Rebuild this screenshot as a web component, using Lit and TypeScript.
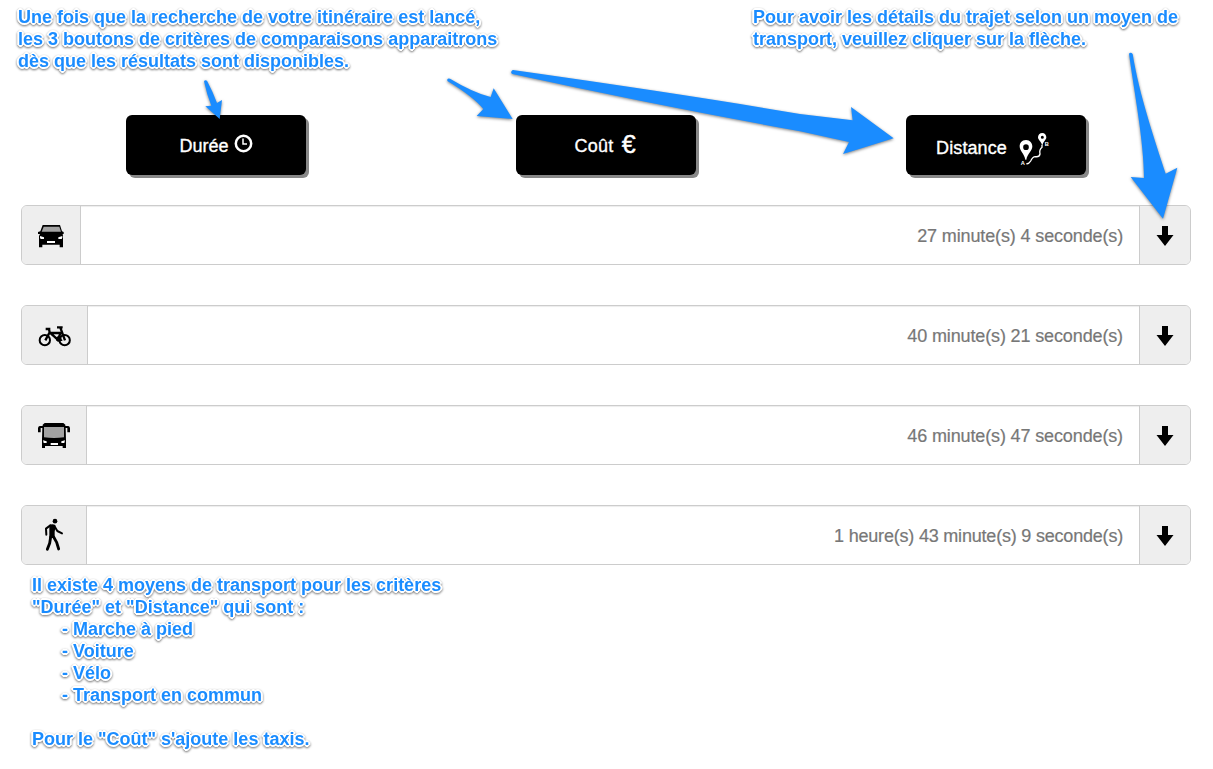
import { LitElement, html, css, svg } from "lit";
import { customElement } from "lit/decorators.js";

const carIcon = svg`
  <path d="M98 90H150L156 109L161 111V117H158L159 123V157H149V149H97V157H87V123L90 117H84V111L91 109Z"/>
  <path fill="#a3a3a3" d="M101 95H148L153 110H95Z"/>
  <path fill="#fff" d="M90 123L102 127V132H92Q89 129 90 123ZM157 123L145 127V132H155Q158 129 157 123ZM111 138H135V144H111Z"/>`;

const bikeIcon = svg`
  <g fill="none" stroke="#000" stroke-width="6">
    <circle cx="104.500" cy="135.500" r="15.500"/><circle cx="164" cy="135.500" r="15.500"/>
    <path stroke-width="7" d="M107 102H121M117 103L119 112L106 136M119 112L143 134L152 114H120M141 97H158M151 98L165 136M144 134L155 134M125 117L143 134"/>
    <path stroke-width="4" d="M141 136H157"/>
  </g>
  <circle cx="146" cy="132" r="8"/>`;

const busIcon = svg`
  <path d="M104 84H160L166 89V93H175Q180 94 180 100V112H172V99H167L168 134V159H158V153H105V159H96V134L97 99H92V112H84V100Q84 94 89 93H98V89Z"/>
  <path fill="#a3a3a3" d="M102 96H162V127Q132 131 102 127Z"/>
  <path fill="#fff" d="M99 136L110 139V144H101ZM165 136L154 139V144H163ZM122 144H144V150H122Z"/>`;

const walkIcon = svg`
  <circle cx="135" cy="78.500" r="7"/>
  <g fill="none" stroke="#000" stroke-linecap="round" stroke-linejoin="round">
    <path stroke-width="6" d="M121 91L108 101L109 119M133 93L142 108L156 115"/>
    <path stroke-width="8.500" d="M122 126L119 145L112 163M131 126L140 142L146 162"/>
  </g>
  <path d="M118 90Q127 85 136 90Q137 99 134 110V129H118V104Z"/>`;

const rows = [
  { icon: carIcon, width: 26, kind: "car", time: "27 minute(s) 4 seconde(s)" },
  { icon: bikeIcon, width: 34, kind: "bike", time: "40 minute(s) 21 seconde(s)" },
  { icon: busIcon, width: 33, kind: "bus", time: "46 minute(s) 47 seconde(s)" },
  { icon: walkIcon, width: 33, kind: "walk", time: "1 heure(s) 43 minute(s) 9 seconde(s)" },
];

@customElement("app-root")
export class AppRoot extends LitElement {
  static styles = css`
    :host {
      display: block;
      position: relative;
      box-sizing: border-box;
      width: 1213px;
      height: 769px;
      overflow: hidden;
      background: #fff;
      font-family: "Liberation Sans", Arial, sans-serif;
      font-size: 18px;
    }
    .notes { display: flex; height: 115px; box-sizing: border-box; padding: 6px 0 0 18px; }
    .note {
      color: #1a8cff;
      font-weight: 700;
      line-height: 22px;
      text-shadow: -2px 0 0 #fff, 2px 0 0 #fff, 0 -2px 0 #fff, 0 2px 0 #fff,
        -1px -1px 0 #fff, 1px -1px 0 #fff, -1px 1px 0 #fff, 1px 1px 0 #fff;
      filter: drop-shadow(0 1.5px 1px rgba(0, 0, 0, 0.55));
    }
    .line { display: block; min-height: 22px; white-space: pre; }
    .launch { width: 735px; }
    .criteria { display: grid; grid-template-columns: repeat(3, 390px); justify-items: center; margin-left: 21px; }
    .button {
      box-sizing: border-box;
      display: flex;
      align-items: center;
      justify-content: center;
      width: 180px;
      height: 60px;
      border-radius: 6px;
      background: #000;
      color: #fff;
      box-shadow: 3px 3px 0 #888;
      -webkit-text-stroke: 0.35px #fff;
    }
    .caption { line-height: 20px; padding-top: 2px; }
    .cost .caption { letter-spacing: 0.3px; }
    .distance .caption { padding-top: 6px; letter-spacing: 0.1px; }
    .button svg { display: block; }
    .clock { margin: 0 0 3px 5px; }
    .euro { font-size: 25px; line-height: 26px; margin: 0 2px 2px 8px; -webkit-text-stroke: 0.4px #fff; }
    .route { margin: 9px 6px 0 12px; }
    .rows { display: flex; flex-direction: column; gap: 40px; margin: 30px 22px 0 21px; }
    .row {
      box-sizing: border-box;
      display: flex;
      height: 60px;
      border: 1px solid #ccc;
      border-radius: 6px;
      overflow: hidden;
      box-shadow: inset 0 1px 1px rgba(0, 0, 0, 0.075);
    }
    .mode { box-sizing: border-box; padding-left: 16px; background: #eee; border-right: 1px solid #ccc; }
    .mode svg { display: block; }
    .car { width: 59px; }
    .bike { width: 66px; }
    .bus, .walk { width: 65px; }
    .time {
      flex: 1;
      padding-right: 16px;
      text-align: right;
      line-height: 60px;
      letter-spacing: -0.13px;
      color: #777;
      -webkit-text-stroke: 0.2px #777;
    }
    .walk + .time { letter-spacing: -0.2px; }
    .expand {
      box-sizing: border-box;
      width: 51px;
      padding-top: 20px;
      padding-left: 16px;
      background: #eee;
      border-left: 1px solid #ccc;
    }
    .expand svg { display: block; }
    .summary { margin: 9px 0 0 32px; }
    .item { padding-left: 30px; }
    .arrows { position: absolute; inset: 0; pointer-events: none; filter: drop-shadow(0 1.5px 1.5px rgba(0, 0, 0, 0.5)); }
  `;

  render() {
    return html`
      <div class="notes">
        <div class="note launch">
          <span class="line">Une fois que la recherche de votre itinéraire est lancé,</span>
          <span class="line">les 3 boutons de critères de comparaisons apparaitrons</span>
          <span class="line">dès que les résultats sont disponibles.</span>
        </div>
        <div class="note">
          <span class="line">Pour avoir les détails du trajet selon un moyen de</span>
          <span class="line">transport, veuillez cliquer sur la flèche.</span>
        </div>
      </div>
      <div class="criteria">
        <div class="button">
          <span class="caption">Durée</span>
          <svg class="clock" width="19" height="19" viewBox="0 0 19 19" fill="none" stroke="#fff">
            <circle cx="9.500" cy="9.500" r="7.700" stroke-width="2.500" />
            <path d="M9 4.500V10H13" stroke-width="1.500" />
          </svg>
        </div>
        <div class="button cost"><span class="caption">Coût</span><span class="euro">€</span></div>
        <div class="button distance">
          <span class="caption">Distance</span>
          <svg class="route" width="31" height="33" viewBox="0 0 93 99">
            <path fill="#fff" fill-rule="evenodd" d="M21 21C8 21 2 31 2 40C2 54 16 63 19 80H22C25 63 40 54 40 40C40 31 33 21 21 21ZM21 34A8.500 8.500 0 1 1 21 51A8.500 8.500 0 1 1 21 34ZM70 0C62 0 57 6 57 13C57 21 66 25 69 35H71C73 25 82 21 82 13C82 6 77 0 70 0ZM70 8A4.500 4.500 0 1 1 70 17A4.500 4.500 0 1 1 70 8Z" />
            <path fill="none" stroke="#fff" stroke-width="4" d="M22 92Q29 94 35 84Q41 71 49 71Q61 73 63 63Q60 50 69 43V35" />
            <text x="5" y="95" font-size="17" font-weight="700" fill="#fff">A</text>
            <text x="77" y="38" font-size="17" font-weight="700" fill="#fff">B</text>
          </svg>
        </div>
      </div>
      <div class="rows">
        ${rows.map(
          (r) => html`<div class="row">
            <div class="mode ${r.kind}">
              <svg width=${r.width} height="58" viewBox="84 33 ${r.width * 3} 174">${r.icon}</svg>
            </div>
            <div class="time">${r.time}</div>
            <div class="expand">
              <svg width="18" height="20" viewBox="0 0 18 20"><path d="M6 0H12V9H17.500L9 20L.5 9H6Z" /></svg>
            </div>
          </div>`
        )}
      </div>
      <div class="note summary">
        <span class="line">Il existe 4 moyens de transport pour les critères</span>
        <span class="line">"Durée" et "Distance" qui sont :</span>
        <span class="line item">- Marche à pied</span>
        <span class="line item">- Voiture</span>
        <span class="line item">- Vélo</span>
        <span class="line item">- Transport en commun</span>
        <span class="line"></span>
        <span class="line">Pour le "Coût" s'ajoute les taxis.</span>
      </div>
      <svg class="arrows" width="1213" height="769" viewBox="0 0 3639 2307" fill="#1a8cff">
        <path d="M612 244Q615 238 621 242Q639 276 651 309L666 300L659 357L616 319L634 317Q620 282 612 244Z" />
        <path d="M1342 238Q1344 234 1350 236Q1420 278 1472 291L1481 265L1538 357L1430 348L1450 327Q1420 290 1342 243Z" />
        <path d="M1535 213Q1537 209 1544 211Q2060 284 2400 342L2558 361L2553 321L2681 415L2529 462L2547 426L2400 394Q1960 314 1537 222Q1531 218 1535 213Z" />
        <path d="M3387 161Q3392 155 3398 162C3418 285 3464 420 3497 521L3532 503L3489 656L3392 531L3432 534C3432 425 3403 280 3387 161Z" />
      </svg>
    `;
  }
}
